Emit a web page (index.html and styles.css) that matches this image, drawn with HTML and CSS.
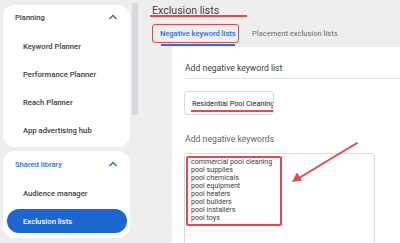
FILE: index.html
```html
<!DOCTYPE html>
<html>
<head>
<meta charset="utf-8">
<link rel="stylesheet" href="styles.css">
</head>
<body>
<div class="sidebar">
  <div class="card card-planning">
    <div class="group-head">
      <span>Planning</span>
      <svg class="chev" width="10" height="6" viewBox="0 0 10 6"><polyline points="1.5,5 5,1.5 8.5,5" fill="none" stroke="#5f6368" stroke-width="1.3"/></svg>
    </div>
    <ul class="items">
      <li class="item">Keyword Planner</li>
      <li class="item">Performance Planner</li>
      <li class="item">Reach Planner</li>
      <li class="item">App advertising hub</li>
    </ul>
  </div>
  <div class="card card-shared">
    <div class="group-head blue">
      <span>Shared library</span>
      <svg class="chev" width="10" height="6" viewBox="0 0 10 6"><polyline points="1.5,5 5,1.5 8.5,5" fill="none" stroke="#1a73e8" stroke-width="1.5"/></svg>
    </div>
    <ul class="items">
      <li class="item">Audience manager</li>
      <li class="item item-active">Exclusion lists</li>
    </ul>
  </div>
</div>
<div class="scrollbar"><div class="thumb"></div></div>
<div class="main">
  <div class="page-title"><span>Exclusion lists</span></div>
  <div class="tabs">
    <div class="tab tab-active">Negative keyword lists</div>
    <div class="tab">Placement exclusion lists</div>
  </div>
  <div class="panel">
    <div class="panel-title">Add negative keyword list</div>
    <div class="field-input"><span class="field-text">Residential Pool Cleaning</span></div>
    <div class="field-label">Add negative keywords</div>
    <div class="textarea">
      <div class="kw-box">
        <div>commercial pool cleaning</div>
        <div>pool supplies</div>
        <div>pool chemicals</div>
        <div>pool equipment</div>
        <div>pool heaters</div>
        <div>pool builders</div>
        <div>pool installers</div>
        <div>pool toys</div>
      </div>
    </div>
  </div>
</div>
<svg class="arrow" width="400" height="243" viewBox="0 0 400 243">
  <line x1="357" y1="143" x2="299" y2="178" stroke="#e5484d" stroke-width="2" stroke-linecap="round"/>
  <polygon points="292,182 297,172.5 302,180.5" fill="#e5484d"/>
</svg>
</body>
</html>
```
FILE: styles.css
```css
* { box-sizing: border-box; }
html, body { margin: 0; padding: 0; }
body {
  width: 400px;
  height: 243px;
  overflow: hidden;
  background: #efeeee;
  display: flex;
  font-family: Roboto, "Liberation Sans", Arial, sans-serif;
  color: #3c4043;
  position: relative;
}
.sidebar {
  width: 130px;
  padding: 5px 0 0 3px;
  display: flex;
  flex-direction: column;
  gap: 4px;
  flex: none;
}
.card {
  background: #fff;
  border-radius: 12px;
  width: 127px;
}
.card-planning { height: 142px; padding-top: 0; }
.card-shared { height: 87px; padding-top: 1px; }
.group-head {
  height: 24px;
  display: flex;
  align-items: center;
  justify-content: space-between;
  padding: 0 12px 0 12px;
  font-size: 7.6px;
  font-weight: 500;
  color: #3c4043;
}
.group-head.blue { color: #1a73e8; }
.chev { display: block; }
.items {
  list-style: none;
  margin: 0;
  padding: 3px 0 0 0;
}
.item {
  height: 28px;
  display: flex;
  align-items: center;
  padding-left: 20px;
  font-size: 7.7px;
  font-weight: 500;
  color: #3c4043;
}
.item-active {
  height: 24px;
  margin: 2px 3px 0 4px;
  padding-left: 16px;
  border-radius: 12px;
  background: #1a67d2;
  color: #fff;
}
.scrollbar {
  width: 6px;
  margin-left: 2px;
  padding-top: 3px;
  flex: none;
}
.thumb {
  height: 112px;
  background: #d6d9dd;
  border-radius: 1px;
}
.main {
  flex: 1;
  margin-left: 2px;
  display: flex;
  flex-direction: column;
  min-width: 0;
}
.page-title {
  position: relative;
  height: 18px;
  padding: 3px 0 0 12px;
  font-size: 10.6px;
  line-height: 16px;
  color: #3c4043;
}
.page-title::after {
  content: "";
  position: absolute;
  left: 10px;
  top: 15px;
  width: 97px;
  height: 2px;
  background: #e5484d;
}
.tabs {
  display: flex;
  align-items: center;
  gap: 13px;
  margin-top: 6px;
  padding-left: 12px;
  height: 19px;
}
.tab {
  font-size: 7.5px;
  font-weight: 500;
  color: #80868b;
  white-space: nowrap;
}
.tab-active {
  position: relative;
  height: 19px;
  width: 87px;
  display: flex;
  align-items: center;
  padding-left: 7px;
  border: 1.5px solid #e5484d;
  border-radius: 3px;
  color: #1a73e8;
}
.tab-active::after {
  content: "";
  position: absolute;
  left: 8px;
  width: 74px;
  top: 19px;
  height: 2px;
  background: #1a73e8;
}
.panel {
  flex: 1;
  margin: 4px 0 0 32px;
  background: #fff;
  padding-left: 13px;
}
.panel-title {
  padding-top: 14px;
  line-height: 14px;
  height: 32px;
  font-size: 8.6px;
  color: #3c4043;
  border-bottom: 1px solid #e3e3e3;
}
.field-input {
  margin: 12px 0 0 -1px;
  width: 90px;
  height: 24px;
  border: 1px solid #dadce0;
  border-radius: 3px;
  padding-left: 7px;
  display: flex;
  align-items: center;
  overflow: hidden;
  position: relative;
}
.field-text {
  font-size: 7.3px;
  white-space: nowrap;
  color: #202124;
}
.field-input::after {
  content: "";
  position: absolute;
  left: 6px;
  top: 18px;
  width: 82px;
  height: 1.5px;
  background: #e5484d;
}
.field-label {
  margin-top: 17px;
  line-height: 14px;
  font-size: 8.7px;
  color: #5f6368;
}
.textarea {
  margin: 7px 0 0 -1px;
  width: 191px;
  height: 100px;
  border: 1px solid #dadce0;
  border-radius: 3px;
  padding: 2px 0 0 1px;
}
.kw-box {
  width: 96px;
  height: 70px;
  border: 2px solid #e5484d;
  border-radius: 2px;
  padding: 0 0 0 3px;
  font-family: Roboto, "Liberation Sans", Arial, sans-serif;
  font-size: 7.1px;
  line-height: 8px;
  white-space: nowrap;
  color: #3c4043;
}
.arrow {
  position: absolute;
  left: 0;
  top: 0;
  pointer-events: none;
}
```
